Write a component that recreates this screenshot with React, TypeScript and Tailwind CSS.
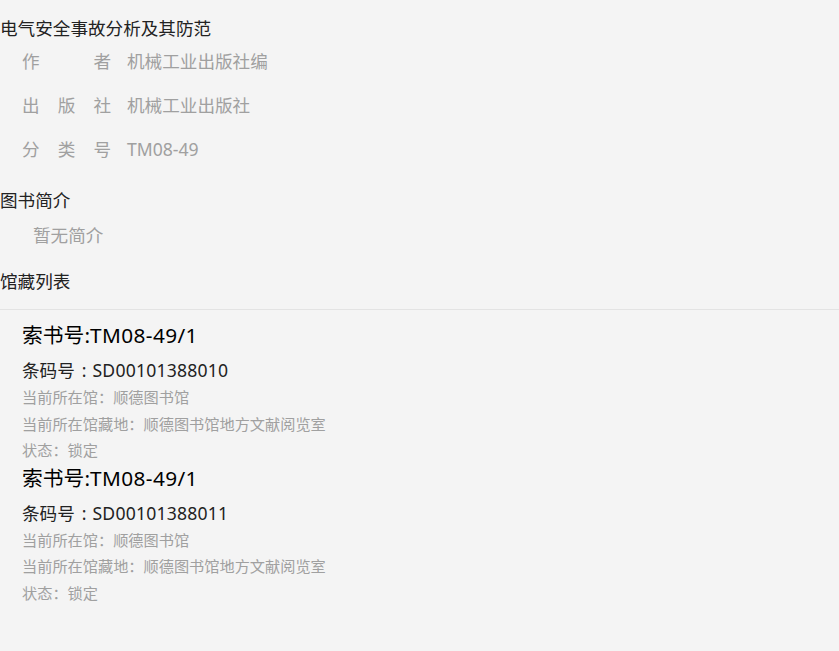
import React from "react";

const font = { fontFamily: '"Noto Sans", "Noto Sans CJK SC", sans-serif' };

function InfoRow({ label, value }: { label: string[]; value: string }) {
  return (
    <div className="flex h-[44px] items-center pl-[22px] text-[17.6px] text-[#a0a0a0]">
      <div className="flex w-[89px] justify-between">
        {label.map((c, i) => (
          <span key={i}>{c}</span>
        ))}
      </div>
      <span className="ml-[16px]">{value}</span>
    </div>
  );
}

function Holding({ barcode }: { barcode: string }) {
  return (
    <div className="pl-[22px]">
      <div className="h-[28px] text-[20.8px] leading-[28px] text-black">
        索书号:<span className="tracking-[0.4px]">TM08-49/1</span>
      </div>
      <div className="mt-[9px] flex h-[24px] items-center text-[17.6px] leading-[24px] text-[#222]">
        <span>条码号</span>
        <span className="ml-[7px] mr-[6px]">:</span>
        <span className="tracking-[0.2px]">{barcode}</span>
      </div>
      <div className="mt-[2px] text-[15.2px] leading-[26.5px] text-[#a0a0a0]">
        <div>当前所在馆：顺德图书馆</div>
        <div>当前所在馆藏地：顺德图书馆地方文献阅览室</div>
        <div>状态：锁定</div>
      </div>
    </div>
  );
}

export default function App() {
  return (
    <div className="min-h-[651px] w-full bg-[#f4f4f4]" style={font}>
      <div className="pt-[17px] text-[17.6px] leading-[22px] text-[#222]">电气安全事故分析及其防范</div>
      <InfoRow label={["作", "者"]} value="机械工业出版社编" />
      <InfoRow label={["出", "版", "社"]} value="机械工业出版社" />
      <InfoRow label={["分", "类", "号"]} value="TM08-49" />
      <div className="mt-[17px] text-[17.6px] leading-[24px] text-[#222]">图书简介</div>
      <div className="mt-[11px] pl-[33px] text-[17.6px] leading-[24px] text-[#a0a0a0]">暂无简介</div>
      <div className="mt-[22px] text-[17.6px] leading-[24px] text-[#222]">馆藏列表</div>
      <div className="mt-[16px] border-t border-[#e3e3e3] pt-[11px]">
        <Holding barcode="SD00101388010" />
        <Holding barcode="SD00101388011" />
      </div>
    </div>
  );
}
